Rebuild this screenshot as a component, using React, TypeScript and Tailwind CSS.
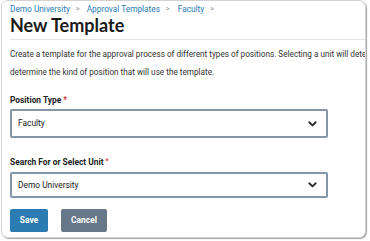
import React from "react";

function Chevron() {
  return (
    <svg width="9" height="6" viewBox="0 0 9 6" className="shrink-0">
      <path d="M1.3 1.3 L4.5 4.4 L7.7 1.3" fill="none" stroke="#2b2b2b" strokeWidth="1.9" strokeLinecap="round" strokeLinejoin="round" />
    </svg>
  );
}

export default function App() {
  return (
    <div className="w-[370px] h-[241px] bg-white overflow-hidden relative" style={{ fontFamily: "Roboto, 'Liberation Sans', sans-serif" }}>
      <div className="absolute left-[1px] top-[0px] w-[365px] h-[238px] rounded-[7px] border border-[#d3d3d3] bg-white shadow-[1px_1px_1px_rgba(0,0,0,0.35)] overflow-hidden">
        <div className="pl-[8px] pt-[1px] w-[600px]">
          <div className="flex items-center h-[14px] text-[8.3px] text-[#2b7bb5]">
            <span>Demo University</span>
            <span className="text-[#888] text-[7px] ml-[6px] mr-[7px]">&gt;</span>
            <span>Approval Templates</span>
            <span className="text-[#888] text-[7px] ml-[6px] mr-[8px]">&gt;</span>
            <span>Faculty</span>
            <span className="text-[#888] text-[7px] ml-[6px]">&gt;</span>
          </div>
          <div className="text-[18px] leading-[20px] -mt-[1px] font-bold text-[#1a1a1a]" style={{ fontFamily: "Lato, sans-serif" }}>New Template</div>
          <div className="mt-[4px] h-px w-[360px] bg-[#e4e4e4]" />
          <div className="mt-[5px] text-[8.2px] leading-[18px] text-[#333] whitespace-nowrap">
            <div>Create a template for the approval process of different types of positions. Selecting a unit will determine</div>
            <div>determine the kind of position that will use the template.</div>
          </div>
          <div className="mt-[13px] text-[8.4px] leading-[12px] font-bold text-[#222]">
            Position Type <span className="text-[#d0312d]">*</span>
          </div>
          <div className="mt-[3px] w-[318px] h-[29px] border-2 border-[#8496a8] rounded-[2px] flex items-center justify-between pl-[6px] pr-[9px] text-[8.4px] text-[#222]">
            <span>Faculty</span>
            <Chevron />
          </div>
          <div className="mt-[18px] text-[8.4px] leading-[12px] font-bold text-[#222]">
            Search For or Select Unit <span className="text-[#d0312d] text-[6.5px] align-top relative -top-[1px]">*</span>
          </div>
          <div className="mt-[4px] w-[318px] h-[26px] border-2 border-[#8496a8] rounded-[2px] flex items-center justify-between pl-[6px] pr-[9px] text-[8.4px] text-[#222]">
            <span>Demo University</span>
            <Chevron />
          </div>
          <div className="mt-[11px] flex gap-[13px]">
            <button className="w-[38px] h-[23px] rounded-[2px] bg-[#2a7cb3] text-white text-[8.4px] font-bold">Save</button>
            <button className="w-[46px] h-[23px] rounded-[2px] bg-[#66788a] text-white text-[8.4px] font-bold">Cancel</button>
          </div>
        </div>
      </div>
    </div>
  );
}
